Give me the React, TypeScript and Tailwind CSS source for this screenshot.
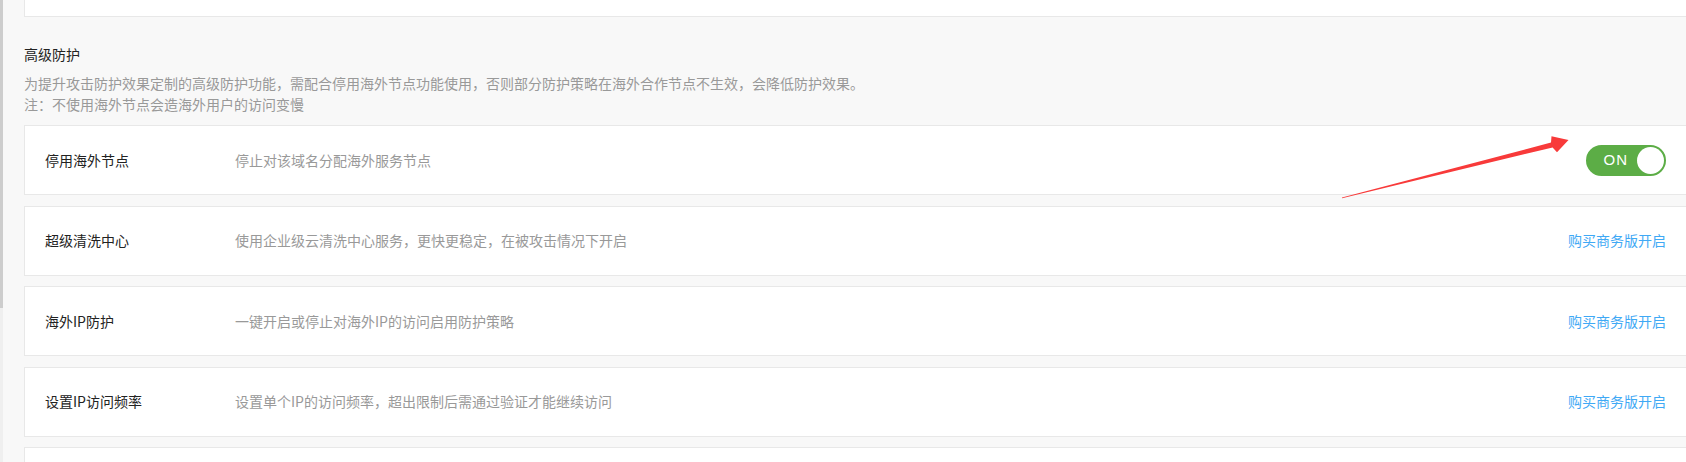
import { useState } from "react";

type Row = {
  title: string;
  desc: string;
  toggle?: boolean;
};

const rows: Row[] = [
  { title: "停用海外节点", desc: "停止对该域名分配海外服务节点", toggle: true },
  { title: "超级清洗中心", desc: "使用企业级云清洗中心服务，更快更稳定，在被攻击情况下开启" },
  { title: "海外IP防护", desc: "一键开启或停止对海外IP的访问启用防护策略" },
  { title: "设置IP访问频率", desc: "设置单个IP的访问频率，超出限制后需通过验证才能继续访问" },
  { title: "", desc: "" },
];

function Toggle() {
  const [on, setOn] = useState(true);
  return (
    <button
      onClick={() => setOn(!on)}
      className={`flex h-[31px] w-[80px] items-center rounded-full border-2 ${
        on ? "border-[#5cad46] bg-[#5cad46] justify-end" : "border-[#ccc] bg-[#ccc] justify-start"
      }`}
    >
      {on && (
        <span className="mr-[9px] text-[15px] tracking-[1px] text-white font-['Liberation_Sans',sans-serif]">
          ON
        </span>
      )}
      <span className="h-[27px] w-[27px] rounded-full bg-white" />
    </button>
  );
}

function Arrow() {
  // red annotation arrow pointing at the switch
  return (
    <svg
      className="pointer-events-none absolute left-0 top-0"
      width={1686}
      height={462}
      viewBox="0 0 1686 462"
    >
      <polygon
        points="1342,197.5 1551,142.6 1551.5,136.3 1568.5,140 1557,152.3 1552.6,147.4 1342,198.3"
        fill="#f83a3a"
      />
    </svg>
  );
}

export default function App() {
  return (
    <div className="relative flex h-[462px] w-full overflow-hidden bg-[#f8f8f8] font-['Noto_Sans_CJK_SC',sans-serif] text-[14px]">
      {/* scrollbar strip */}
      <div className="flex w-[3px] shrink-0 flex-col bg-[#efefef]">
        <div className="h-[308px] bg-[#cdcdcd]" />
      </div>

      <div className="mr-[-12px] flex-1 pl-[21px]">
        <div className="h-[17px] border-b border-l border-[#e8e8e8] bg-white" />

        <h3 className="mt-[27px] leading-[21px] text-[#222]">高级防护</h3>
        <div className="mt-[8px] leading-[21px] text-[#999]">
          <p>
            为提升攻击防护效果定制的高级防护功能，需配合停用海外节点功能使用，否则部分防护策略在海外合作节点不生效，会降低防护效果。
          </p>
          <p>注：不使用海外节点会造海外用户的访问变慢</p>
        </div>

        <div className="mt-[10px] flex flex-col gap-[10.5px]">
          {rows.map((row, i) => (
            <div
              key={i}
              className="flex h-[70px] shrink-0 items-center border border-[#e8e8e8] bg-white pl-[20px] pr-[31px]"
            >
              <div className="w-[190px] shrink-0 text-[#222]">{row.title}</div>
              <div className="flex-1 text-[#999]">{row.desc}</div>
              {row.title &&
                (row.toggle ? (
                  <Toggle />
                ) : (
                  <a className="cursor-pointer text-[#3fa9f5]">购买商务版开启</a>
                ))}
            </div>
          ))}
        </div>
      </div>

      <Arrow />
    </div>
  );
}
